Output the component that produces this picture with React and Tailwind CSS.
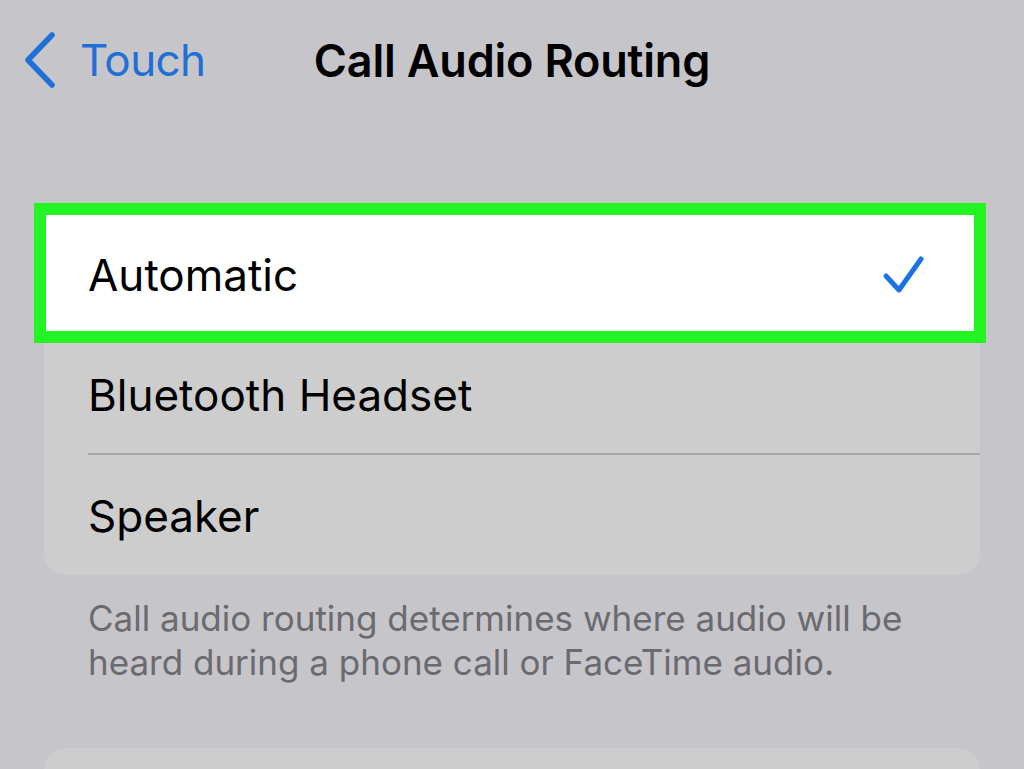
import React from "react"

const font = { fontFamily: "Inter, 'Noto Sans', sans-serif" }

function BackChevron() {
  return (
    <svg width="34" height="56" viewBox="0 0 34 56" fill="none">
      <path d="M28 3 L4 28 L28 53" stroke="#1f6fd6" strokeWidth="5.5" strokeLinecap="round" strokeLinejoin="round" />
    </svg>
  )
}

function Check() {
  return (
    <svg width="44" height="40" viewBox="0 0 44 40" fill="none">
      <path d="M4 21 L17 35 L39 4" stroke="#1a72e6" strokeWidth="5" strokeLinecap="round" strokeLinejoin="round" />
    </svg>
  )
}

const options = ["Automatic", "Bluetooth Headset", "Speaker"]

export default function App() {
  return (
    <div className="min-h-[769px] h-[769px] overflow-hidden bg-[#c6c5ca] text-black" style={font}>
      {/* Navigation bar */}
      <div className="grid grid-cols-[1fr_auto_1fr] items-center h-[120px]">
        <div className="flex items-center pl-[24px] gap-[22px]">
          <BackChevron />
          <span className="text-[44px] text-[#1f6fd6] tracking-[-0.6px] leading-none">Touch</span>
        </div>
        <h1 className="text-[45px] font-semibold tracking-[-0.2px] leading-none">Call Audio Routing</h1>
        <div />
      </div>

      {/* Options list */}
      <div className="mt-[93px] mx-[44px] w-[936px] rounded-[22px] bg-[#cdcdcd]">
        {options.map((label, i) => (
          <div key={label} className="relative">
            {i === 0 && (
              <div className="absolute left-[-10px] top-[-10px] w-[952px] h-[140px] border-[12px] border-[#23f424] bg-white" />
            )}
            <div className={`relative flex items-center justify-between ${i === 2 ? "h-[122px]" : "h-[120px]"}`}>
              {i === 2 && <div className="absolute top-0 left-[44px] right-0 h-[2px] bg-[#a8a8aa]" />}
              <span className="pl-[44px] pt-[3px] text-[44px] tracking-[0px] leading-none">{label}</span>
              {i === 0 && (
                <span className="pr-[54px] pt-[4px]">
                  <Check />
                </span>
              )}
            </div>
          </div>
        ))}
      </div>

      {/* Footer note */}
      <p className="mt-[21px] pl-[88px] pr-[40px] text-[35px] leading-[44px] text-[#6b6b6f] tracking-[0px] whitespace-nowrap">
        Call audio routing determines where audio will be
        <br />
        heard during a phone call or FaceTime audio.
      </p>

      {/* Next group */}
      <div className="mt-[64px] mx-[44px] w-[936px] h-[80px] rounded-[22px] bg-[#cdcdcd]" />
    </div>
  )
}
